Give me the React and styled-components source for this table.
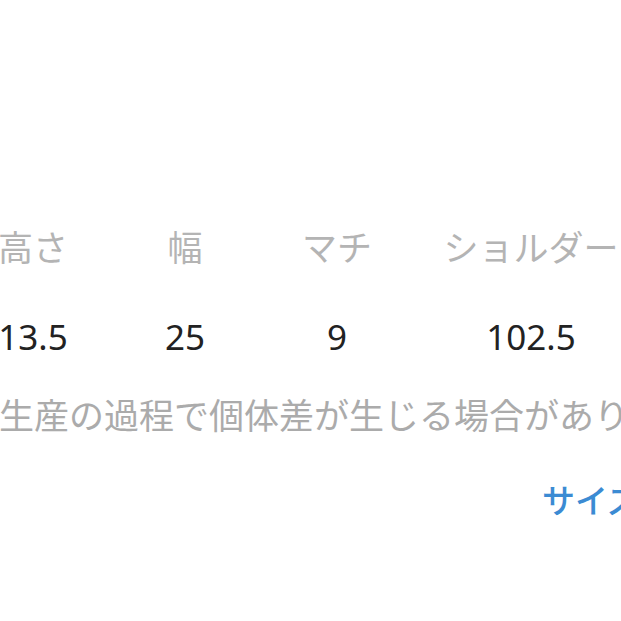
import React from "react";
import styled, {createGlobalStyle} from "styled-components";

const GlobalStyle = createGlobalStyle`
  html, body {
    margin: 0;
    padding: 0;
    background: #fff;
    overflow: hidden;
  }
  body {
    font-family: "Noto Sans CJK JP", "Noto Sans", sans-serif;
  }
`;

const Page = styled.div`
  width: 621px;
  height: 621px;
  overflow: hidden;
  background: #fff;
`;

const Content = styled.div`
  width: 900px;
  margin-left: -43px;
  padding-top: 216px;
`;

const SizeTable = styled.div`
  display: grid;
  grid-template-columns: 152px 152px 152px 236px;
  row-gap: 31px;
`;

const Cell = styled.div`
  height: 60px;
  display: flex;
  align-items: center;
  justify-content: center;
  font-size: 35px;
  line-height: 60px;
  white-space: nowrap;
  color: ${p => (p.$head ? "#b4b4b4" : "#222")};
  font-family: ${p =>
    p.$head
      ? `"Noto Sans CJK JP", sans-serif`
      : `"Noto Sans", "Noto Sans CJK JP", sans-serif`};
`;

const Note = styled.p`
  margin: 22px 0 0 42px;
  height: 50px;
  line-height: 50px;
  font-size: 35px;
  color: #ababab;
  white-space: nowrap;
`;

const GuideLink = styled.a`
  display: block;
  margin: 35px 0 0 585px;
  height: 50px;
  line-height: 50px;
  font-size: 33px;
  font-weight: 500;
  color: #3b8bd3;
  text-decoration: none;
  white-space: nowrap;
`;

const heads = ["高さ", "幅", "マチ", "ショルダー"];
const values = ["13.5", "25", "9", "102.5"];

export default function App() {
  return (
    <Page>
      <GlobalStyle/>
      <Content>
        <SizeTable>
          {heads.map(h => (
            <Cell key={h} $head>{h}</Cell>
          ))}
          {values.map(v => (
            <Cell key={v}>{v}</Cell>
          ))}
        </SizeTable>
        <Note>生産の過程で個体差が生じる場合があります。</Note>
        <GuideLink href="#">サイズガイド</GuideLink>
      </Content>
    </Page>
  );
}
